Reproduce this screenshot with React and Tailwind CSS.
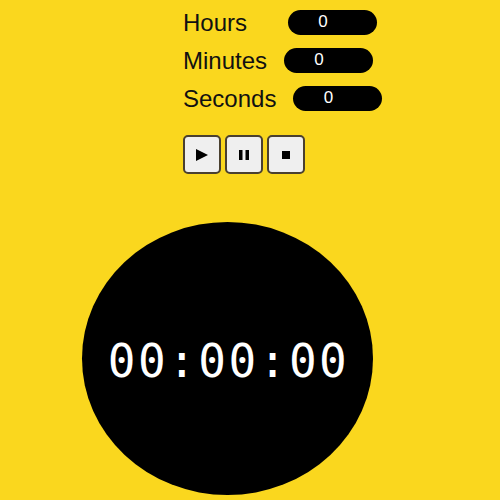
import React, { useState } from "react";

const Field = ({ label, value, gap }) => (
  <div className="flex items-center h-[38px]">
    <span className="text-[24px] text-[#111] pt-[1px]">{label}</span>
    <div className={`${gap} w-[89px] h-[25px] rounded-full bg-black text-white text-[17px] flex items-center justify-center pr-[19px]`}>
      {value}
    </div>
  </div>
);

const CtrlButton = ({ children }) => (
  <button className="w-[38px] h-[39px] bg-[#efefef] border-2 border-[#4a4030] rounded-[5px] flex items-center justify-center">
    {children}
  </button>
);

export default function App() {
  const [h] = useState(0);
  const [m] = useState(0);
  const [s] = useState(0);

  return (
    <main className="w-[500px] h-[500px] bg-[#fad71e] overflow-hidden" style={{ fontFamily: '"Liberation Sans", Arial, sans-serif' }}>
      <div className="pl-[183px] pt-[3px]">
        <Field label="Hours" value={h} gap="ml-[41px]" />
        <Field label="Minutes" value={m} gap="ml-[17px]" />
        <Field label="Seconds" value={s} gap="ml-[17px]" />

        <div className="flex gap-[4px] mt-[18px]">
          <CtrlButton>
            <svg width="14" height="14" viewBox="0 0 14 14"><polygon points="1,1 13,7 1,13" fill="#000" /></svg>
          </CtrlButton>
          <CtrlButton>
            <svg width="12" height="12" viewBox="0 0 12 12">
              <rect x="1" y="1" width="3.5" height="10" fill="#000" />
              <rect x="7.5" y="1" width="3.5" height="10" fill="#000" />
            </svg>
          </CtrlButton>
          <CtrlButton>
            <div className="w-[8px] h-[8px] bg-black" />
          </CtrlButton>
        </div>
      </div>

      <div className="ml-[82px] mt-[48px] w-[291px] h-[273px] rounded-[50%] bg-black flex items-center justify-center">
        <span className="text-white text-[46px] tracking-[2.5px] pl-[2px] pt-[5px]" style={{ fontFamily: '"DejaVu Sans Mono", monospace' }}>
          00:00:00
        </span>
      </div>
    </main>
  );
}
